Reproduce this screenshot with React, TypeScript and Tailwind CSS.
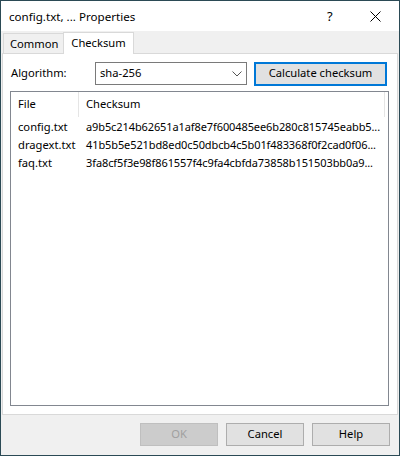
import React from "react";

const files = [
  { name: "config.txt", sum: "a9b5c214b62651a1af8e7f600485ee6b280c815745eabb5..." },
  { name: "dragext.txt", sum: "41b5b5e521bd8ed0c50dbcb4c5b01f483368f0f2cad0f06..." },
  { name: "faq.txt", sum: "3fa8cf5f3e98f861557f4c9fa4cbfda73858b151503bb0a9..." },
];

const DialogButton = ({ label, disabled }: { label: string; disabled?: boolean }) => (
  <div
    className={`w-[78px] h-[23px] flex items-center justify-center border ${
      disabled
        ? "bg-[#cccccc] border-[#bfbfbf] text-[#a0a0a0]"
        : "bg-[#e1e1e1] border-[#adadad] text-black"
    }`}
  >
    {label}
  </div>
);

const App = () => {
  return (
    <div
      className="w-[400px] h-[456px] flex flex-col bg-[#f0f0f0] border border-[#2b4a55] text-[11.2px] text-black overflow-hidden"
      style={{ fontFamily: '"Noto Sans", "Open Sans", sans-serif' }}
    >
      {/* title bar */}
      <div className="h-[30px] bg-white flex items-center pl-[8px] shrink-0 text-[11.6px]">
        <span className="flex-1 pt-[1px]">config.txt, ... Properties</span>
        <span className="w-[8px] text-[13px] mr-[35px] pt-[1px]">?</span>
        <svg width="11" height="11" viewBox="0 0 11 11" className="mr-[18px]">
          <path d="M0.5 0.5 L10.5 10.5 M10.5 0.5 L0.5 10.5" stroke="#000" strokeWidth="1" />
        </svg>
      </div>

      {/* tabs */}
      <div className="h-[22px] flex items-end pl-[2px] shrink-0">
        <div className="h-[20px] px-[6px] flex items-center border border-b-0 border-[#d9d9d9] bg-[#f0f0f0] w-[61px] pt-[1px]">
          Common
        </div>
        <div className="h-[22px] w-[71px] -ml-[1px] flex items-center justify-center border border-b-0 border-[#d9d9d9] bg-white pb-[1px] relative z-10 mb-[-1px]">
          Checksum
        </div>
      </div>

      {/* panel */}
      <div className="mx-[1px] h-[362px] bg-white border border-[#d9d9d9] flex flex-col px-[7px] pt-[8px] shrink-0">
        <div className="flex items-center h-[23px]">
          <span className="w-[85px] pl-[1px]">Algorithm:</span>
          <div className="w-[152px] h-[23px] border border-[#7a7a7a] flex items-center pl-[4px] pr-[4px]">
            <span className="flex-1">sha-256</span>
            <svg width="10" height="6" viewBox="0 0 10 6">
              <path d="M0.5 0.5 L5 5 L9.5 0.5" fill="none" stroke="#555" strokeWidth="1" />
            </svg>
          </div>
          <div className="ml-[7px] w-[133px] h-[24px] border-2 border-[#0078d7] bg-[#e1e1e1] flex items-center justify-center">
            Calculate checksum
          </div>
        </div>

        <div className="mt-[6px] w-[379px] h-[315px] border border-[#828790] bg-white flex flex-col overflow-hidden">
          <div className="h-[25px] flex shrink-0">
            <div className="w-[68px] pl-[7px] flex items-center border-r border-[#e5e5e5]">File</div>
            <div className="w-[306px] pl-[7px] flex items-center border-r border-[#e5e5e5]">Checksum</div>
          </div>
          <div className="flex flex-col pt-[1px]">
            {files.map((f) => (
              <div key={f.name} className="h-[18px] flex items-center">
                <span className="w-[68px] pl-[7px] whitespace-nowrap">{f.name}</span>
                <span className="pl-[7px] whitespace-nowrap text-[11px] tracking-[-0.1px]">{f.sum}</span>
              </div>
            ))}
          </div>
        </div>
      </div>

      {/* footer */}
      <div className="flex justify-end gap-[8px] pt-[8px] pr-[9px]">
        <DialogButton label="OK" disabled />
        <DialogButton label="Cancel" />
        <DialogButton label="Help" />
      </div>
    </div>
  );
};

export default App;
